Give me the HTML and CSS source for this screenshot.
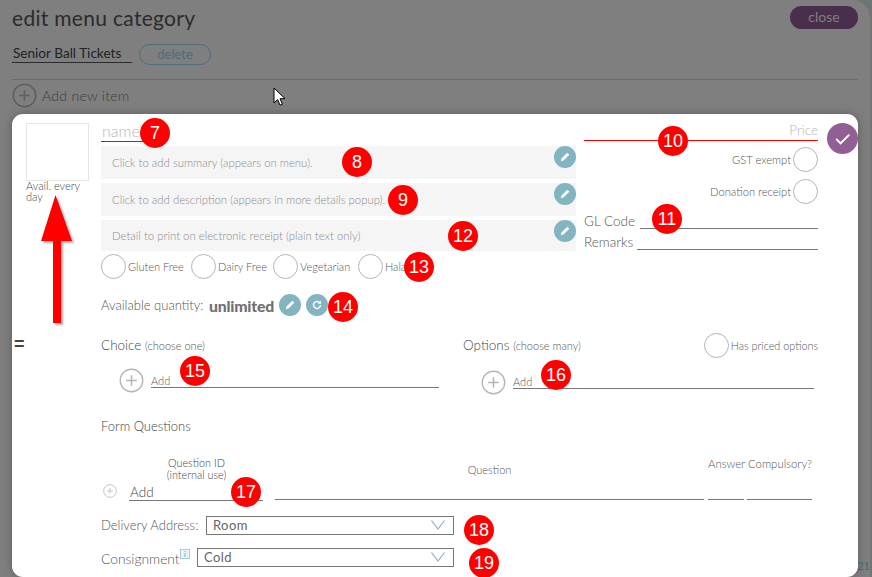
FILE: index.html
```html
<!DOCTYPE html>
<html lang="en">
<head>
<meta charset="utf-8">
<title>edit menu category</title>
<link rel="stylesheet" href="styles.css">
</head>
<body>
<div class="page">
  <div class="page-inner">
    <header class="cat-head">
      <h1 class="cat-title">edit menu category</h1>
      <span class="btn-close">close</span>
    </header>
    <div class="cat-name-row">
      <span class="cat-name">Senior Ball Tickets</span>
      <span class="btn-delete">delete</span>
    </div>
    <div class="add-item">
      <svg class="plus-lg" viewBox="0 0 26 26"><circle cx="13" cy="13" r="11.7" fill="none" stroke="currentColor" stroke-width="1.6"/><path d="M13 7.5v11M7.5 13h11" stroke="currentColor" stroke-width="1.6"/></svg>
      <span>Add new item</span>
    </div>
  </div>
  <span class="side-mark">=</span>
  <svg class="cursor" viewBox="0 0 14 20"><path d="M1 1v15l3.6-3.4 2.400 5.600 2.400-1-2.400-5.500h5z" fill="#fff" stroke="#000" stroke-width="1"/></svg>
  <span class="edge-text">21</span>
  <main class="modal">
    <div class="top">
      <aside class="pic-col">
        <div class="pic"></div>
        <div class="avail">Avail. every day</div>
      </aside>
      <section class="mid-col">
        <div class="name-field">name</div>
        <div class="txt-box h33"><span>Click to add summary (appears on menu).</span><i class="pen"><svg viewBox="0 0 22 22"><path d="M6.800 15.200l.7-2.700 5.800-5.800 2 2-5.800 5.800z" fill="#fff"/></svg></i></div>
        <div class="txt-box h33"><span>Click to add description (appears in more details popup).</span><i class="pen"><svg viewBox="0 0 22 22"><path d="M6.800 15.200l.7-2.700 5.800-5.800 2 2-5.800 5.800z" fill="#fff"/></svg></i></div>
        <div class="txt-box h31"><span>Detail to print on electronic receipt (plain text only)</span><i class="pen"><svg viewBox="0 0 22 22"><path d="M6.800 15.200l.7-2.700 5.800-5.800 2 2-5.800 5.800z" fill="#fff"/></svg></i></div>
        <div class="diet">
          <span class="ck"><i class="ring"></i>Gluten Free</span>
          <span class="ck"><i class="ring"></i>Dairy Free</span>
          <span class="ck"><i class="ring"></i>Vegetarian</span>
          <span class="ck"><i class="ring"></i>Halal</span>
        </div>
        <div class="qty">
          <span class="qty-label">Available quantity:</span>
          <b class="qty-val">unlimited</b>
          <i class="pen static"><svg viewBox="0 0 22 22"><path d="M6.800 15.200l.7-2.700 5.800-5.800 2 2-5.800 5.800z" fill="#fff"/></svg></i>
          <i class="pen static"><svg viewBox="0 0 22 22"><path d="M14.500 11a3.500 3.500 0 1 1-1-2.500" fill="none" stroke="#fff" stroke-width="1.400"/><path d="M15 6.500v3.200h-3.200z" fill="#fff"/></svg></i>
        </div>
      </section>
      <section class="price-col">
        <div class="price">Price</div>
        <div class="tog"><span>GST exempt</span><i class="ring"></i></div>
        <div class="tog"><span>Donation receipt</span><i class="ring"></i></div>
        <div class="line-field gl"><span>GL Code</span><i></i></div>
        <div class="line-field rem"><span>Remarks</span><i></i></div>
      </section>
      <div class="save"><svg viewBox="0 0 32 32"><path d="M9.500 16.500l4.500 4.500 9-9" fill="none" stroke="#fff" stroke-width="2"/></svg></div>
    </div>
    <div class="groups">
      <section class="group choice">
        <h2 class="group-title">Choice <small>(choose one)</small></h2>
        <div class="add-row"><svg class="plus" viewBox="0 0 26 26"><circle cx="13" cy="13" r="11.700" fill="none" stroke="#b5b5b5" stroke-width="1.400"/><path d="M13 7.500v11M7.500 13h11" stroke="#b5b5b5" stroke-width="1.600"/></svg><span class="add-line">Add</span></div>
      </section>
      <section class="group options">
        <div class="opt-head">
          <h2 class="group-title">Options <small>(choose many)</small></h2>
          <span class="priced"><i class="ring"></i>Has priced options</span>
        </div>
        <div class="add-row"><svg class="plus" viewBox="0 0 26 26"><circle cx="13" cy="13" r="11.700" fill="none" stroke="#b5b5b5" stroke-width="1.400"/><path d="M13 7.500v11M7.500 13h11" stroke="#b5b5b5" stroke-width="1.600"/></svg><span class="add-line">Add</span></div>
      </section>
    </div>
    <section class="form-q">
      <h2 class="fq-title">Form Questions</h2>
      <div class="fq-grid">
        <svg class="plus-sm" viewBox="0 0 14 14"><circle cx="7" cy="7" r="6.300" fill="none" stroke="#c4c4c4"/><path d="M7 4v6M4 7h6" stroke="#c4c4c4"/></svg>
        <div class="fq-id"><div class="fq-id-head">Question ID<br>(internal use)</div><div class="fq-id-line">Add</div></div>
        <div class="fq-q"><div class="fq-q-head">Question</div><div class="fq-q-line"></div></div>
        <div class="fq-c"><div class="fq-c-head">Answer Compulsory?</div><div class="fq-c-lines"><i></i><i></i></div></div>
      </div>
      <div class="sel-row r1"><span>Delivery Address:</span><div class="sel">Room<svg viewBox="0 0 14 10"><path d="M.5 .5l6.500 8.500 6.500-8.500" fill="none" stroke="#86b4c1" stroke-width="1.200"/></svg></div></div>
      <div class="sel-row r2"><span>Consignment<svg class="info" viewBox="0 0 10 10"><rect x=".5" y=".5" width="9" height="9" fill="#eaf3f6" stroke="#a9cbd6"/><path d="M5 2v1M5 4v4" stroke="#7fb0c0"/></svg></span><div class="sel">Cold<svg viewBox="0 0 14 10"><path d="M.5 .5l6.500 8.500 6.500-8.500" fill="none" stroke="#86b4c1" stroke-width="1.200"/></svg></div></div>
    </section>
  </main>
  <svg class="arrow" viewBox="0 0 36 130"><path d="M17.500 1L34 47H23V129H15V47H3z" fill="#f00"/></svg>
  <span class="num n7">7</span><span class="num n8">8</span><span class="num n9">9</span><span class="num n10">10</span><span class="num n11">11</span><span class="num n12">12</span><span class="num n13">13</span><span class="num n14">14</span><span class="num n15">15</span><span class="num n16">16</span><span class="num n17">17</span><span class="num n18">18</span><span class="num n19">19</span>
</div>
</body>
</html>
```
FILE: styles.css
```css
* { box-sizing: border-box; }
html, body { margin: 0; padding: 0; }
body { width: 872px; height: 577px; overflow: hidden; background: #6c7676; font-family: Lato, "Open Sans", sans-serif; font-weight: 300; color: #555; }
i { display: block; font-style: normal; }
.page { position: relative; width: 870px; height: 577px; background: #7f7f7f; border-top-right-radius: 18px; }
.page-inner { padding: 6px 12px 0 12px; color: #2c2c2c; }
.cat-head { display: flex; justify-content: space-between; align-items: flex-start; height: 38px; }
.cat-title { margin: 0; font-size: 21px; font-weight: 400; color: #2b2b2b; letter-spacing: .3px; line-height: 24px; }
.btn-close { width: 68px; height: 23px; border-radius: 12px; background: #4a2f4d; color: #7f7f7f; font-size: 14px; font-weight: 400; text-align: center; line-height: 22px; }
.cat-name-row { display: flex; align-items: flex-start; height: 35px; }
.cat-name { width: 120px; height: 19px; border-bottom: 1px solid #2b2b2b; padding-left: 1px; font-size: 13.600px; font-weight: 400; line-height: 19px; white-space: nowrap; color: #222; }
.btn-delete { width: 72px; height: 21px; margin-left: 7px; border: 1px solid #4d6d78; border-radius: 11px; color: #4d6d78; font-size: 13px; font-weight: 400; text-align: center; line-height: 18px; }
.add-item { display: flex; align-items: center; gap: 5px; border-top: 1px solid #6c6c6c; padding-top: 3px; font-size: 14px; letter-spacing: .3px; color: #3d3d3d; }
.plus-lg { width: 25px; height: 25px; color: #5f5f5f; }
.side-mark { position: absolute; z-index: 3; left: 14px; top: 336px; font: 700 18px/16px "Liberation Sans", sans-serif; color: #444; }
.cursor { position: absolute; left: 273px; top: 87px; width: 14px; height: 20px; }
.edge-text { position: absolute; right: 0; top: 559px; font-size: 11px; font-weight: 400; color: #3f6f7f; }
.modal { position: absolute; left: 12px; top: 114px; width: 846px; height: 463px; background: #fff; border-radius: 11px; padding: 9px 0 0 14px; box-shadow: 0 0 10px rgba(0,0,0,.28); }
.top { display: flex; align-items: flex-start; height: 208px; }
.pic-col { width: 75px; }
.pic { width: 63px; height: 58px; border: 1px solid #e6e6e6; }
.avail { width: 60px; margin-top: -1px; font-size: 11px; line-height: 11px; font-weight: 300; color: #444; }
.mid-col { width: 475px; }
.name-field { width: 42px; height: 19px; padding-left: 1px; border-bottom: 1px solid #f00; font-size: 16px; line-height: 15px; color: #b5b5b5; font-weight: 300; }
.txt-box { position: relative; display: flex; align-items: center; background: #f5f5f5; padding-left: 11px; margin-top: 4px; font-size: 11.350px; color: #8c8c8c; font-weight: 300; }
.txt-box span { white-space: nowrap; }
.txt-box.h33 { height: 33px; }
.txt-box.h31 { height: 31px; }
.pen { width: 22px; height: 22px; border-radius: 50%; background: #83b4c1; flex: none; }
.pen svg { display: block; width: 22px; height: 22px; }
.txt-box .pen { position: absolute; right: 0; top: 0; }
.diet { display: flex; margin-top: 3px; height: 25px; }
.ck { display: flex; align-items: center; gap: 2px; font-size: 11px; color: #555; font-weight: 300; white-space: nowrap; }
.ck:nth-child(1) { width: 90px; }
.ck:nth-child(2) { width: 82px; }
.ck:nth-child(3) { width: 85px; }
.ring { display: block; flex: none; width: 25px; height: 25px; border: 1.500px solid #b5b5b5; border-radius: 50%; background: #fff; }
.qty { display: flex; align-items: center; margin-top: 14px; height: 24px; }
.qty-label { font-size: 13px; width: 108px; white-space: nowrap; color: #555; }
.qty-val { font-size: 15.800px; font-weight: 900; color: #707070; width: 70px; letter-spacing: -.2px; }
.qty .pen + .pen { margin-left: 5px; }
.price-col { width: 234px; margin-left: 8px; }
.price { height: 18px; border-bottom: 1px solid #f00; text-align: right; font-size: 13.500px; line-height: 15px; color: #b5b5b5; font-weight: 300; }
.tog { display: flex; justify-content: flex-end; align-items: center; gap: 2px; font-size: 11.200px; font-weight: 300; color: #555; height: 25px; }
.tog:nth-child(2) { margin-top: 6px; }
.tog:nth-child(3) { margin-top: 7px; }
.line-field { display: flex; align-items: flex-end; font-size: 13.500px; color: #555; line-height: 15px; }
.line-field i { flex: 1; height: 1px; background: #777; }
.gl { margin-top: 5px; height: 20px; }
.gl i { margin-left: 5px; }
.rem { height: 21px; }
.rem i { margin-left: 4px; }
.save { flex: none; width: 31px; height: 31px; margin: 0 0 0 9px; border-radius: 50%; background: #915f94; }
.save svg { display: block; width: 31px; height: 31px; }
.groups { display: flex; margin-top: 3px; height: 70px; }
.group.choice { width: 338px; margin-left: 75px; }
.group.options { width: 355px; margin-left: 24px; }
.group-title { margin: 0; height: 22px; font-size: 13.500px; line-height: 22px; font-weight: 300; color: #444; white-space: nowrap; }
.group-title small { font-size: 11px; font-weight: 300; color: #555; }
.opt-head { display: flex; justify-content: space-between; }
.priced { display: flex; align-items: center; gap: 2px; font-size: 10.800px; font-weight: 300; color: #555; height: 22px; }
.add-row { display: flex; align-items: flex-end; margin-left: 18px; height: 32px; }
.plus { width: 25px; height: 25px; flex: none; margin-right: 7px; margin-bottom: -5px; }
.add-line { flex: 1; font-size: 11px; line-height: 13px; color: #555; font-weight: 300; border-bottom: 1px solid #777; }
.options .add-row { margin-right: 4px; margin-top: 1px; }
.options .plus { margin-bottom: -6px; }
.fq-title { margin: 14px 0 0 75px; height: 35px; font-size: 13px; line-height: 16px; font-weight: 300; color: #444; }
.fq-grid { display: flex; align-items: flex-end; margin-left: 77px; height: 48px; }
.plus-sm { width: 14px; height: 14px; flex: none; margin-bottom: 3px; margin-right: 12px; }
.fq-id { width: 134px; }
.fq-id-head { text-align: center; font-size: 10.800px; line-height: 12px; font-weight: 300; color: #444; margin-left: 1px; margin-bottom: 3px; }
.fq-id-line { font-size: 13.500px; line-height: 16px; padding-left: 1px; border-bottom: 1px solid #777; font-weight: 300; color: #444; }
.fq-q { width: 429px; margin-left: 12px; margin-bottom: 1px; }
.fq-q-head { text-align: center; font-size: 11px; line-height: 12px; font-weight: 300; color: #555; margin-bottom: 23px; }
.fq-q-line { height: 1px; background: #777; }
.fq-c { width: 104px; margin-left: 4px; margin-bottom: 1px; }
.fq-c-head { font-size: 11.400px; line-height: 12px; font-weight: 300; color: #555; white-space: nowrap; margin-bottom: 29px; }
.fq-c-lines { display: flex; gap: 3px; width: 104px; }
.fq-c-lines i { height: 1px; background: #777; }
.fq-c-lines i:first-child { width: 36px; }
.fq-c-lines i:last-child { width: 65px; }
.sel-row { display: flex; align-items: center; margin-left: 75px; font-size: 13px; color: #555; white-space: nowrap; }
.sel-row.r1 { margin-top: 14px; height: 20px; }
.sel-row.r2 { margin-top: 12px; height: 20px; }
.sel-row > span { display: flex; align-items: flex-start; }
.sel-row.r1 > span { width: 105px; }
.sel-row.r2 > span { width: 96px; font-size: 13.800px; padding-top: 2px; }
.sel { display: flex; justify-content: space-between; align-items: center; height: 19px; width: 248px; padding: 0 8px 0 6px; border: 1px solid #777; font-size: 13px; font-weight: 400; color: #666; letter-spacing: .4px; }
.r2 .sel { width: 257px; }
.sel svg { width: 14px; height: 10px; }
.info { width: 10px; height: 10px; flex: none; margin-top: -1px; }
.arrow { position: absolute; left: 38px; top: 194px; width: 36px; height: 130px; filter: drop-shadow(2px 2px 1px rgba(0,0,0,.35)); }
.num { position: absolute; z-index: 4; width: 30px; height: 30px; border-radius: 50%; background: #f00; color: #fff; font: 400 18px/30px "Liberation Sans", sans-serif; text-align: center; }
.n7 { left: 140px; top: 118px; }
.n8 { left: 342px; top: 147px; }
.n9 { left: 388px; top: 185px; }
.n10 { left: 658px; top: 126px; }
.n11 { left: 652px; top: 204px; }
.n12 { left: 448px; top: 221px; }
.n13 { left: 404px; top: 252px; }
.n14 { left: 328px; top: 292px; }
.n15 { left: 180px; top: 356px; }
.n16 { left: 541px; top: 360px; }
.n17 { left: 231px; top: 477px; }
.n18 { left: 464px; top: 515px; }
.n19 { left: 469px; top: 548px; }
```
